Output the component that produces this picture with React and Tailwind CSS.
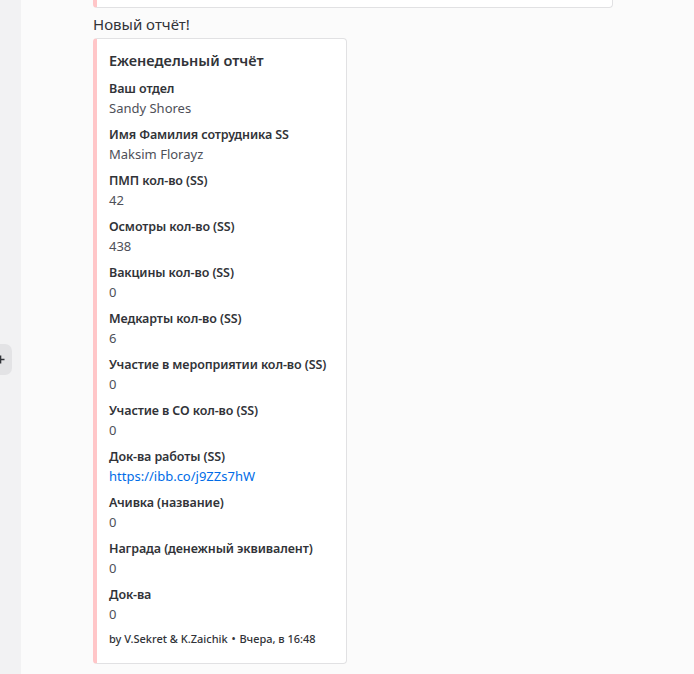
import React from 'react';

const fields = [
  { name: 'Ваш отдел', value: 'Sandy Shores' },
  { name: 'Имя Фамилия сотрудника SS', value: 'Maksim Florayz' },
  { name: 'ПМП кол-во (SS)', value: '42' },
  { name: 'Осмотры кол-во (SS)', value: '438' },
  { name: 'Вакцины кол-во (SS)', value: '0' },
  { name: 'Медкарты кол-во (SS)', value: '6' },
  { name: 'Участие в мероприятии кол-во (SS)', value: '0' },
  { name: 'Участие в СО кол-во (SS)', value: '0' },
  { name: 'Док-ва работы (SS)', value: 'https://ibb.co/j9ZZs7hW', link: true },
  { name: 'Ачивка (название)', value: '0' },
  { name: 'Награда (денежный эквивалент)', value: '0' },
  { name: 'Док-ва', value: '0' },
];

const App = () => {
  return (
    <div className="flex h-[674px] w-[694px] overflow-hidden bg-[#fbfbfb] font-['Noto_Sans',sans-serif]">
      {/* Side strip */}
      <div className="relative w-[21px] shrink-0 bg-[#f2f2f3]">
        <div className="absolute left-0 top-[344px] h-[31px] w-[12px] overflow-hidden rounded-r-[7px] bg-[#e3e3e5]">
          <svg className="absolute left-[-4px] top-[11px]" width="9" height="9" viewBox="0 0 9 9">
            <path d="M4.5 0.5v8M0.5 4.5h8" stroke="#313338" strokeWidth="1.6" />
          </svg>
        </div>
      </div>

      {/* Messages */}
      <div className="flex-1 pl-[72px]">
        {/* previous embed bottom */}
        <div className="h-[8px] w-[520px] rounded-b-[4px] border-b border-r border-[#e1e1e3] border-l-[4px] border-l-[#ffc6c8] bg-white" />

        <div className="mt-[6px] text-[15px] leading-[20px] text-[#313338]">Новый отчёт!</div>

        <div className="mt-[4px] w-[254px] rounded-[4px] border border-[#e1e1e3] border-l-[4px] border-l-[#ffc6c8] bg-white pb-[16px] pl-[12px] pr-[12px] pt-[12px]">
          <div className="text-[14.5px] font-semibold leading-[18px] text-[#313338]">Еженедельный отчёт</div>
          <div className="mt-[11px] flex flex-col gap-[8px]">
            {fields.map((f) => (
              <div key={f.name}>
                <div className="whitespace-nowrap text-[12.5px] font-semibold leading-[18px] tracking-[-0.1px] text-[#313338]">
                  {f.name}
                </div>
                <div
                  className={`text-[13px] leading-[20px] ${
                    f.link ? 'text-[#006ce7]' : 'text-[#4e5058]'
                  }`}
                >
                  {f.value}
                </div>
              </div>
            ))}
          </div>
          <div className="mt-[7px] whitespace-nowrap text-[11px] font-medium leading-[16px] text-[#313338]">
            by V.Sekret &amp; K.Zaichik <span className="mx-[1px]">•</span> Вчера, в 16:48
          </div>
        </div>
      </div>
    </div>
  );
};

export default App;
